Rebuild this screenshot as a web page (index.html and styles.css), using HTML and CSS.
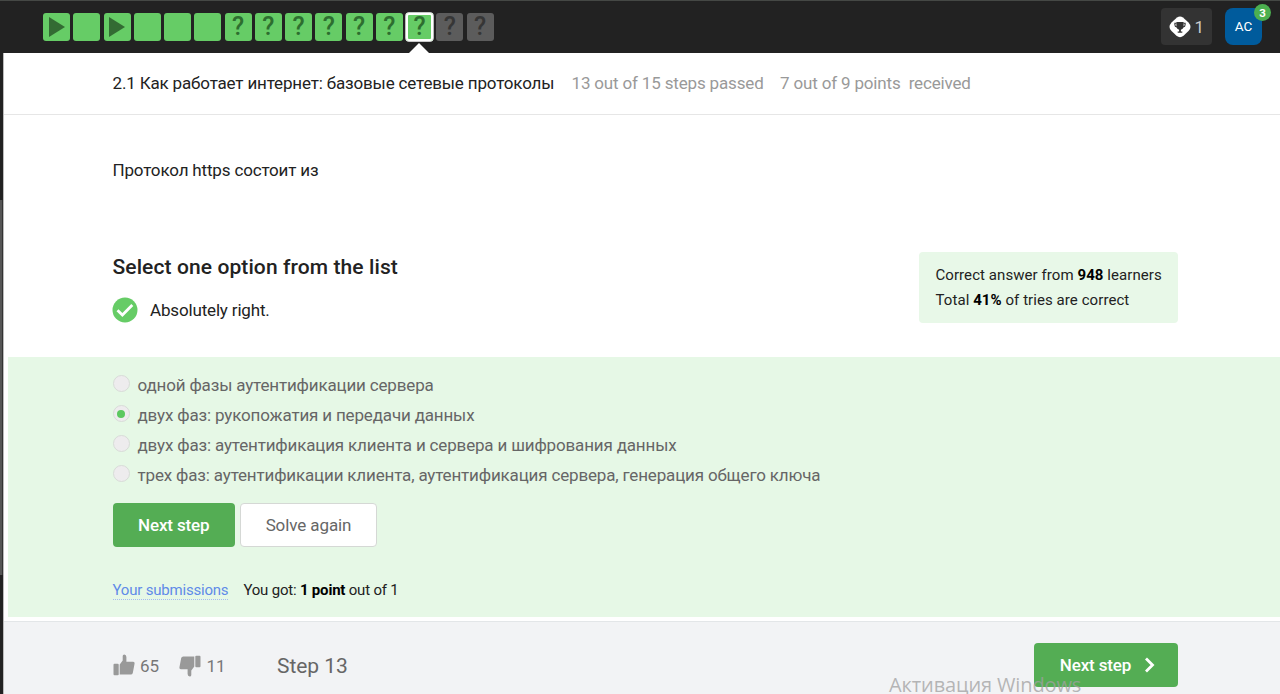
FILE: index.html
```html
<!DOCTYPE html>
<html lang="ru">
<head>
<meta charset="utf-8">
<title>2.1 Как работает интернет</title>
<link rel="stylesheet" href="styles.css">
</head>
<body>
<svg class="sprite" width="0" height="0">
  <symbol id="thumb" viewBox="0 0 22 22"><path d="M0.5 10.8Q.5 9.8 1.5 9.8H4.7Q5.7 9.8 5.7 10.8V20.5Q5.7 21.2 4.7 21.2H1.5Q.5 21.2.5 20.2ZM6.7 10.5 9.7 6.5V2Q9.7.5 11.3.5 13.3.6 13.4 3V7.8H20.2Q21.8 7.8 21.6 9.5L19.8 19Q19.4 20.6 17.7 20.6H6.7Z"/></symbol>
</svg>
<header class="topbar">
  <nav class="steps">
    <a class="step"><i class="play"></i></a><a class="step"></a><a class="step"><i class="play"></i></a><a class="step"></a><a class="step"></a><a class="step"></a><a class="step">?</a><a class="step">?</a><a class="step">?</a><a class="step">?</a><a class="step">?</a><a class="step">?</a><a class="step active">?</a><a class="step locked">?</a><a class="step locked">?</a>
  </nav>
  <div class="account">
    <div class="trophy">
      <svg width="22" height="22" viewBox="0 0 22 22"><path d="M8 1.5Q11 -.5 14 1.5L19.5 6.5Q23.5 11 19.5 15L14.5 19.8Q11 22.5 7.5 19.8L2.5 15Q-1.5 11 2.5 6.5Z" fill="#fff"/><path d="M7.4 6h7.2v5q-.5 2.2-2.7 2.7v1.8h1.4v1.2H8.7v-1.2h1.4v-1.8q-2.2-.5-2.7-2.7Z" fill="#333"/><path d="M7.5 7.2H5.9v1.5q0 2 2 2.2M14.5 7.2h1.6v1.5q0 2-2 2.2" fill="none" stroke="#333" stroke-width="1.1"/></svg>
      <span>1</span>
    </div>
    <div class="avatar">AC<span class="badge">3</span></div>
  </div>
</header>
<div class="shell">
  <aside class="edge"><div class="thumbbar"></div></aside>
  <main class="page">
    <div class="lesson">
      <span class="lesson-title">2.1 Как работает интернет: базовые сетевые протоколы</span>
      <span class="passed">13 out of 15 steps passed</span>
      <span class="points">7 out of 9 points&nbsp; received</span>
    </div>
    <p class="question">Протокол https состоит из</p>
    <section class="intro">
      <div>
        <h2>Select one option from the list</h2>
        <div class="verdict">
          <svg width="26" height="26" viewBox="0 0 26 26"><circle cx="13" cy="13" r="12.5" fill="#66cc66"/><path d="M5.5 13.2 10.4 18 20.3 8" fill="none" stroke="#fff" stroke-width="2.8"/></svg>
          <span>Absolutely right.</span>
        </div>
      </div>
      <div class="stats"><div>Correct answer from <b>948</b> learners</div><div>Total <b>41%</b> of tries are correct</div></div>
    </section>
    <section class="quiz">
      <div class="option"><i class="radio"></i><span>одной фазы аутентификации сервера</span></div>
      <div class="option"><i class="radio on"></i><span>двух фаз: рукопожатия и передачи данных</span></div>
      <div class="option"><i class="radio"></i><span>двух фаз: аутентификация клиента и сервера и шифрования данных</span></div>
      <div class="option"><i class="radio"></i><span>трех фаз: аутентификации клиента, аутентификация сервера, генерация общего ключа</span></div>
      <div class="actions"><button class="btn primary">Next step</button><button class="btn plain">Solve again</button></div>
      <div class="result"><a class="submissions">Your submissions</a><span class="got">You got: <b>1 point</b> out of 1</span></div>
    </section>
    <footer class="footer">
      <div class="vote up"><svg class="icon" width="22" height="22"><use href="#thumb"/></svg><span>65</span></div>
      <div class="vote down"><svg class="icon flip" width="22" height="22"><use href="#thumb"/></svg><span>11</span></div>
      <span class="step-label">Step 13</span>
      <button class="btn primary next">Next step<svg width="12" height="16" viewBox="0 0 12 16"><path d="M2 1.5 8.5 8 2 14.5" fill="none" stroke="#fff" stroke-width="2.8"/></svg></button>
    </footer>
  </main>
</div>
<div class="watermark">Активация Windows</div>
</body>
</html>
```
FILE: styles.css
```css
* { box-sizing: border-box; }
body { margin: 0; height: 694px; overflow: hidden; position: relative; background: #fff; color: #222; font-family: Roboto, "Liberation Sans", sans-serif; font-size: 17px; letter-spacing: -.163px; }
.sprite { position: absolute; }
.topbar { height: 53px; background: #222; border-top: 1px solid #454845; display: flex; justify-content: space-between; padding: 0 18px 0 43px; }
.steps { display: flex; gap: 3.25px; padding-top: 11.5px; }
.step { width: 27px; height: 28px; border-radius: 3px; background: #66cc66; color: #2d6e2f; font-size: 25px; line-height: 28px; font-weight: 500; letter-spacing: 0; display: flex; align-items: center; justify-content: center; position: relative; }
.play { width: 0; height: 0; border-left: 16px solid #336b33; border-top: 10px solid transparent; border-bottom: 10px solid transparent; }
.active { box-shadow: inset 0 0 0 2px #fff, 0 0 0 .7px #fff; }
.active::after { content: ""; position: absolute; left: 3px; top: 30.5px; border: 10px solid transparent; border-top: 0; border-bottom-color: #fff; }
.locked { background: #5c5c5c; color: #363636; }
.account { display: flex; gap: 13px; padding-top: 7px; letter-spacing: 0; }
.trophy { width: 51px; height: 37px; border-radius: 4px; background: #333; color: #ccc; font-size: 17px; display: flex; align-items: center; gap: 4px; padding-left: 7.5px; }
.avatar { width: 37px; height: 37px; border-radius: 8px; background: #005b9c; color: #fff; font-size: 13.5px; line-height: 14px; padding-bottom: 2px; display: flex; align-items: center; justify-content: center; position: relative; }
.badge { position: absolute; right: -9px; top: -4px; width: 17px; height: 17px; border-radius: 50%; background: #4caf50; font-size: 11.5px; font-weight: 700; display: flex; align-items: center; justify-content: center; }
.shell { display: flex; height: 641px; }
.edge { width: 4px; background: #222; border-right: 1px solid #bbb; padding-top: 147px; }
.thumbbar { height: 375px; background: #555; border-right: 1px solid #333; }
.page { flex: 1; display: flex; flex-direction: column; min-width: 0; white-space: nowrap; }
.lesson { height: 62px; border-bottom: 1px solid #e6e6e6; padding: 0 0 2px 108.5px; display: flex; align-items: center; color: #999; flex: none; }
.lesson-title { color: #222; width: 459px; }
.passed { width: 208.5px; }
.question { margin: 0; height: 111px; line-height: 111px; padding-left: 108.5px; }
.intro { height: 131px; padding: 26px 102px 0 108.5px; display: flex; justify-content: space-between; }
h2 { font-size: 21px; line-height: 30px; font-weight: 500; letter-spacing: .1px; margin: 0; }
.verdict { display: flex; align-items: center; gap: 12px; margin-top: 14.5px; }
.verdict svg { margin-left: -.5px; }
.stats { width: 259px; height: 71px; border-radius: 4px; background: #e8f8e8; padding: 11px 16.5px; font-size: 15px; line-height: 25px; letter-spacing: .07px; }
b { font-weight: 700; color: #000; }
.quiz { margin-left: 4px; height: 260px; background: #e6f8e6; padding: 12.5px 0 0 104.5px; }
.option { height: 30px; display: flex; align-items: center; gap: 8px; color: #666; }
.radio { width: 17px; height: 17px; margin-bottom: 2px; border: 1px solid #d8dcd8; border-radius: 50%; background: #eeecee; display: flex; align-items: center; justify-content: center; }
.on::after { content: ""; width: 8px; height: 8px; border-radius: 50%; background: #5cc860; }
.actions { display: flex; gap: 5px; margin-top: 13px; }
.btn { border: 0; border-radius: 4px; height: 44px; font: 500 17px Roboto, sans-serif; letter-spacing: -.15px; padding: 0; }
.primary { width: 122.5px; color: #fff; background: #54ad54; }
.plain { width: 137px; color: #666; background: #fff; border: 1px solid #d5d8d5; font-weight: 400; letter-spacing: -.1px; }
.result { display: flex; align-items: center; gap: 15px; margin-top: 33.5px; font-size: 15px; line-height: 20px; letter-spacing: -.2px; }
.submissions { color: #608be8; border-bottom: 1px dotted #a5bdf0; line-height: 18px; }
.footer { margin-top: 4px; height: 73px; flex: none; border-top: 1px solid #e3e6e8; background: #f2f3f5; padding: 0 102px 0 108.5px; display: flex; align-items: flex-start; color: #777; }
.vote { display: flex; align-items: center; height: 22px; margin-top: 33px; gap: 5.5px; width: 66.5px; }
.vote svg { margin-top: -2px; }
.down { width: 98px; }
.icon { fill: #999; }
.flip { transform: translateY(1px) rotate(180deg); }
.step-label { font-size: 21px; line-height: 24px; margin-top: 32px; color: #666; letter-spacing: -.05px; }
.next { width: 144px; margin: 21px 0 0 auto; display: flex; align-items: center; justify-content: center; gap: 13px; padding-left: 4px; }
.watermark { position: absolute; left: 889px; top: 675px; font: 20px/19px "Open Sans", "Noto Sans", sans-serif; letter-spacing: -.12px; color: rgba(160, 160, 160, .75); white-space: nowrap; }
```
